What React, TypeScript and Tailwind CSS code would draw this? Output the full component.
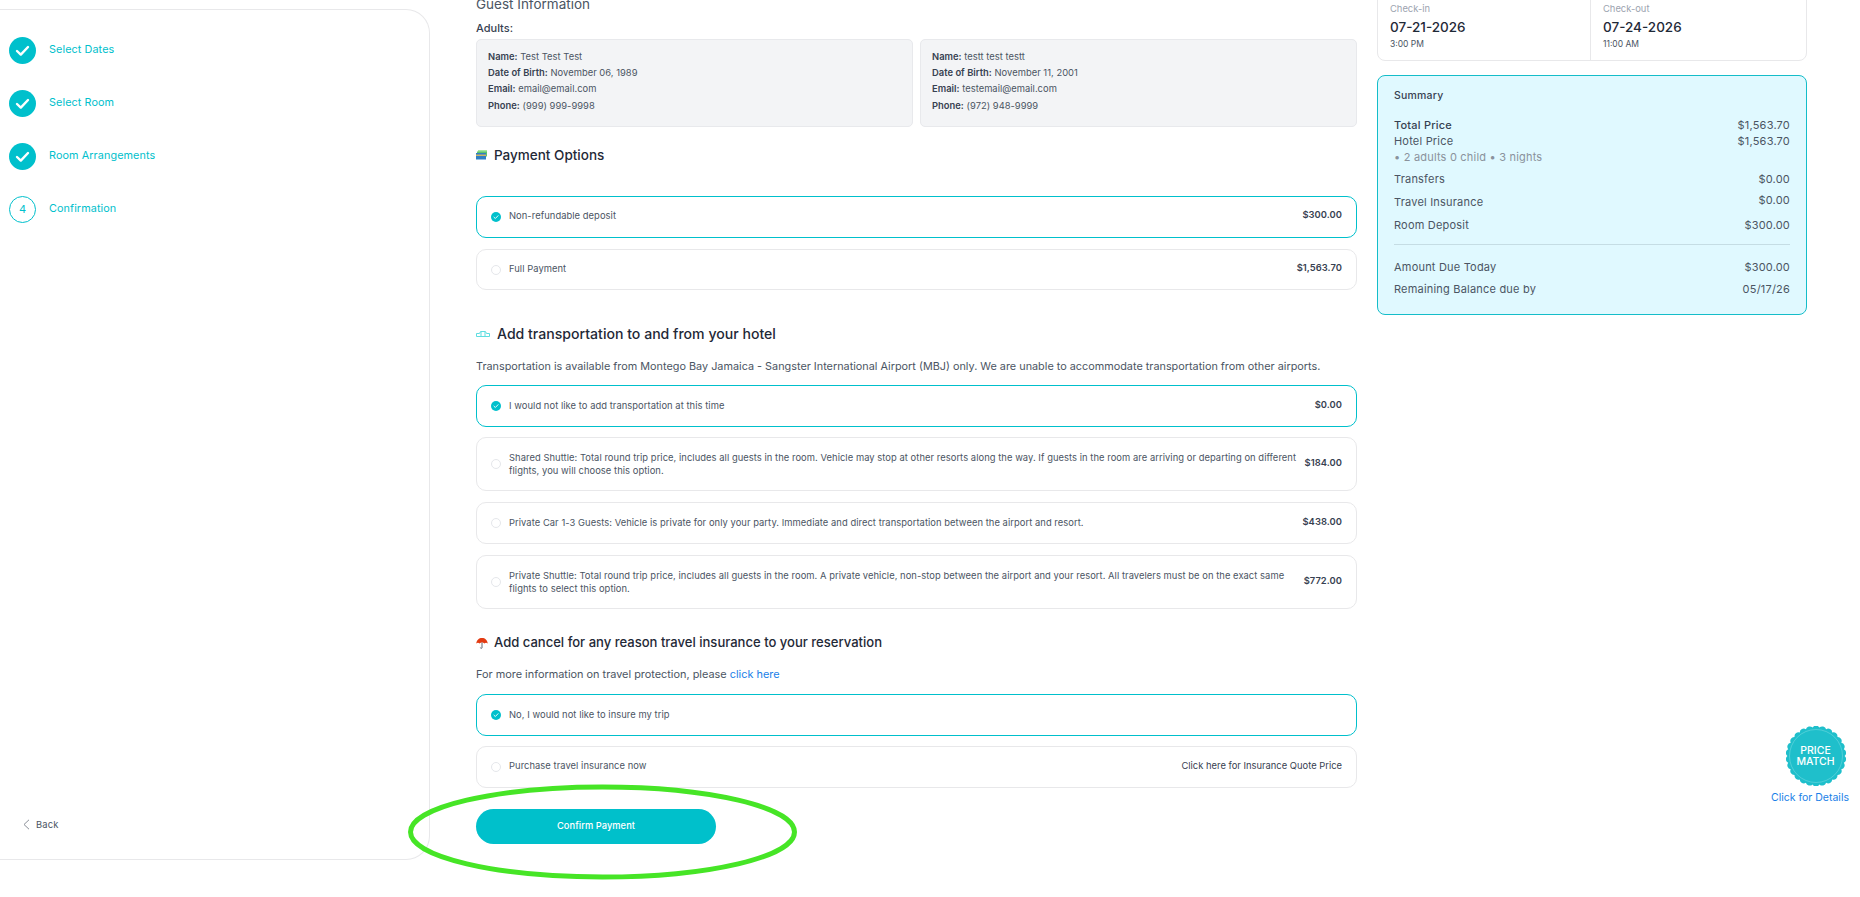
import React from "react";

const Check = ({ s = 27 }: { s?: number }) => (
  <svg width={s} height={s} viewBox="0 0 27 27" className="shrink-0">
    <circle cx="13.5" cy="13.5" r="13.5" fill="#00c0cc" />
    <path d="M8 14l3.8 3.6L19 10" fill="none" stroke="#fff" strokeWidth="2.4" strokeLinecap="round" strokeLinejoin="round" />
  </svg>
);

const Step = ({ label, n, low }: { label: string; n?: number; low?: boolean }) => (
  <div className="flex items-center h-[27px] gap-[13px]">
    {n ? (
      <div className="w-[27px] h-[27px] rounded-full border border-[#00c0cc] flex items-center justify-center text-[11px] text-[#00c0cc]">{n}</div>
    ) : (
      <Check />
    )}
    <span className={`text-[10.8px] text-[#00c0cc] tracking-[0.1px] ${low ? "" : "-mt-[1px]"}`}>{label}</span>
  </div>
);

const Option = ({ sel, h, price, children, mt, up }: { sel?: boolean; h: string; price: string; children: React.ReactNode; mt: string; up?: boolean }) => (
  <div className={`flex items-center rounded-[10px] border bg-white pl-[14px] pr-[14px] ${h} ${mt} ${sel ? "border-[#00c0cc]" : "border-[#e8e8ea]"}`}>
    {sel ? (
      <Check s={10} />
    ) : (
      <div className="w-[10px] h-[10px] rounded-full border border-[#e5e7eb] shrink-0" />
    )}
    <div className={`ml-[8px] flex-1 min-w-0 whitespace-nowrap text-[9.4px] leading-[13px] text-[#4b5563] tracking-[0.05px] ${up ? "-mt-[3px]" : "-mt-[1px]"}`}>{children}</div>
    <div className={`ml-1 text-[9.4px] font-semibold text-[#374151] tracking-[0.05px] whitespace-nowrap ${up ? "-mt-[3px]" : "-mt-[1px]"}`}>{price}</div>
  </div>
);

const Guest = ({ name, dob, email, phone }: { name: string; dob: string; email: string; phone: string }) => (
  <div className="flex-1 h-[88px] rounded-[5px] border border-[#e8e9ec] bg-[#f3f4f6] pl-[11px] pt-[9px] text-[9.4px] leading-[16px] text-[#4b5563] tracking-[0.02px]">
    <div><b className="font-semibold text-[#374151]">Name:</b> {name}</div>
    <div><b className="font-semibold text-[#374151]">Date of Birth:</b> {dob}</div>
    <div><b className="font-semibold text-[#374151]">Email:</b> {email}</div>
    <div className="mt-[1px]"><b className="font-semibold text-[#374151]">Phone:</b> {phone}</div>
  </div>
);

const Line = ({ a, b, cls = "", bcls = "" }: { a: string; b?: string; cls?: string; bcls?: string }) => (
  <div className={`flex justify-between h-[16px] items-center ${cls}`}>
    <span>{a}</span>
    {b && <span className={bcls}>{b}</span>}
  </div>
);

function scallop() {
  const n = 26;
  const cx = 30;
  const cy = 30;
  let d = "";
  for (let i = 0; i < n; i++) {
    const a0 = (i / n) * Math.PI * 2;
    const a1 = ((i + 1) / n) * Math.PI * 2;
    const r = 28.6;
    const x0 = cx + r * Math.cos(a0);
    const y0 = cy + r * Math.sin(a0);
    const x1 = cx + r * Math.cos(a1);
    const y1 = cy + r * Math.sin(a1);
    d += i === 0 ? `M${x0.toFixed(2)} ${y0.toFixed(2)}` : "";
    d += `A4 4 0 0 1 ${x1.toFixed(2)} ${y1.toFixed(2)}`;
  }
  return d + "Z";
}

export default function App() {
  return (
    <div className="relative h-[897px] w-[1860px] overflow-hidden bg-white flex font-['Inter',sans-serif]">
      <aside className="mt-[9px] h-[851px] w-[430px] shrink-0 rounded-r-[24px] border border-l-0 border-[#e8e8ea] pl-[9px] pt-[27px] pb-[27px] flex flex-col">
        <div className="flex flex-col gap-[26px]">
          <Step label="Select Dates" />
          <Step label="Select Room" />
          <Step label="Room Arrangements" low />
          <Step label="Confirmation" n={4} low />
        </div>
        <div className="mt-auto ml-[14px] flex items-center gap-[6px] text-[9.4px] text-[#4b5563] tracking-[0.2px]">
          <svg width="7" height="11" viewBox="0 0 7 11"><path d="M6 .8L1 5.5 6 10.2" fill="none" stroke="#8a8f98" strokeWidth="1" /></svg>
          <span>Back</span>
        </div>
      </aside>

      <main className="ml-[46px] w-[881px] shrink-0 -mt-[6px] text-[#374151]">
        <div className="h-[20px] flex items-center text-[13.5px] text-[#4b5563]">Guest Information</div>
        <div className="mt-[6px] h-[16px] flex items-center text-[11px] font-medium text-[#374151]">Adults:</div>
        <div className="mt-[3px] flex gap-[7px]">
          <Guest name="Test Test Test" dob="November 06, 1989" email="email@email.com" phone="(999) 999-9998" />
          <Guest name="testt test testt" dob="November 11, 2001" email="testemail@email.com" phone="(972) 948-9999" />
        </div>

        <div className="mt-[18px] h-[20px] flex items-center gap-[7px] text-[13.5px] font-[450] text-[#1f2937]">
          <svg width="11" height="10" viewBox="0 0 11 10">
            <rect x="2" y="0" width="9" height="5" fill="#a7e6a0" />
            <rect x="1" y="1.5" width="10" height="5" fill="#5cc46a" />
            <rect x="0" y="3" width="10" height="6.5" fill="#2f7fc4" />
            <rect x="0" y="4.6" width="10" height="1.2" fill="#f3c04e" />
          </svg>
          Payment Options
        </div>
        <Option sel up h="h-[42px]" mt="mt-[31px]" price="$300.00">Non-refundable deposit</Option>
        <Option up h="h-[41px]" mt="mt-[11px]" price="$1,563.70">Full Payment</Option>

        <div className="mt-[34px] h-[20px] flex items-center gap-[7px] text-[14.1px] font-[450] text-[#1f2937]">
          <svg width="14" height="7" viewBox="0 0 14 7" fill="none" stroke="#5fdde0" strokeWidth="1">
            <path d="M.5 2.5h3l1-2h5l1 2h3v3h-13z" />
            <path d="M5 1v4M9 1v4" />
          </svg>
          Add transportation to and from your hotel
        </div>
        <div className="mt-[14px] h-[16px] flex items-center text-[10.85px] text-[#4b5563] whitespace-nowrap">
          Transportation is available from Montego Bay Jamaica - Sangster International Airport (MBJ) only. We are unable to accommodate transportation from other airports.
        </div>
        <Option sel h="h-[42px]" mt="mt-[11px]" price="$0.00">I would not like to add transportation at this time</Option>
        <Option h="h-[54px]" mt="mt-[10px]" price="$184.00">
          Shared Shuttle: Total round trip price, includes all guests in the room. Vehicle may stop at other resorts along the way. If guests in the room are arriving or departing on different<br />flights, you will choose this option.
        </Option>
        <Option h="h-[42px]" mt="mt-[11px]" price="$438.00">
          Private Car 1-3 Guests: Vehicle is private for only your party. Immediate and direct transportation between the airport and resort.
        </Option>
        <Option h="h-[54px]" mt="mt-[11px]" price="$772.00">
          Private Shuttle: Total round trip price, includes all guests in the room. A private vehicle, non-stop between the airport and your resort. All travelers must be on the exact same<br />flights to select this option.
        </Option>

        <div className="mt-[24px] h-[20px] flex items-center gap-[6px] text-[13.06px] font-[450] text-[#1f2937]">
          <svg width="12" height="12" viewBox="0 0 12 12">
            <path d="M.3 6.6C.6 3 3 1 6 1s5.4 2 5.7 5.6C10.6 5.6 9.4 5.6 8.4 6.6 7.6 5.7 6.8 5.6 6 5.6s-1.6.1-2.4 1C2.6 5.6 1.4 5.6.3 6.6z" fill="#e33b12" />
            <path d="M6 5.6v5c0 1-1.6 1-1.6 0" fill="none" stroke="#374151" strokeWidth=".8" />
          </svg>
          Add cancel for any reason travel insurance to your reservation
        </div>
        <div className="mt-[13px] h-[16px] flex items-center text-[10.9px] text-[#4b5563]">
          For more information on travel protection, please&nbsp;<span className="text-[#1a7fe8]">click here</span>
        </div>
        <Option sel h="h-[42px]" mt="mt-[12px]" price="">No, I would not like to insure my trip</Option>
        <div className="mt-[10px] h-[42px] flex items-center rounded-[10px] border border-[#e8e8ea] px-[14px]">
          <div className="w-[10px] h-[10px] rounded-full border border-[#e5e7eb] shrink-0" />
          <div className="ml-[8px] flex-1 text-[9.4px] text-[#4b5563] tracking-[0.05px] -mt-[1px]">Purchase travel insurance now</div>
          <div className="text-[9.4px] text-[#374151] -mt-[1px]">Click here for Insurance Quote Price</div>
        </div>
        <div className="mt-[21px] h-[35px] w-[240px] rounded-full bg-[#00c0cb] flex items-center justify-center text-[9.3px] font-medium text-white tracking-[0.05px]">
          <span className="-mt-[1px]">Confirm Payment</span>
        </div>
      </main>

      <section className="ml-[20px] w-[430px] shrink-0 -mt-[10px]">
        <div className="h-[71px] rounded-[8px] border border-[#e8e8ea] flex">
          <div className="w-[213px] pl-[12px] pt-[12px] border-r border-[#e8e8ea]">
            <div className="h-[12px] flex items-center text-[9.4px] text-[#9ca3af]">Check-in</div>
            <div className="mt-[2px] h-[20px] flex items-center text-[13.5px] font-[450] text-[#1f2937]">07-21-2026</div>
            <div className="mt-[1px] h-[12px] flex items-center text-[8.5px] text-[#4b5563]">3:00 PM</div>
          </div>
          <div className="flex-1 pl-[12px] pt-[12px]">
            <div className="h-[12px] flex items-center text-[9.4px] text-[#9ca3af]">Check-out</div>
            <div className="mt-[2px] h-[20px] flex items-center text-[13.5px] font-[450] text-[#1f2937]">07-24-2026</div>
            <div className="mt-[1px] h-[12px] flex items-center text-[8.5px] text-[#4b5563]">11:00 AM</div>
          </div>
        </div>
        <div className="mt-[14px] h-[240px] rounded-[8px] border border-[#14bdc9] bg-[#e0f9ff] px-[16px] pt-[12px] text-[11px] text-[#4b5563] tracking-[0.2px]">
          <div className="h-[16px] flex items-center text-[10.5px] font-medium text-[#374151]">Summary</div>
          <Line a="Total Price" b="$1,563.70" cls="mt-[13px] font-medium text-[#374151]" bcls="font-normal text-[#4b5563]" />
          <Line a="Hotel Price" b="$1,563.70" />
          <Line a="• 2 adults 0 child • 3 nights" cls="text-[#8a929c]" />
          <Line a="Transfers" b="$0.00" cls="mt-[6px]" />
          <div className="mt-[7px] flex justify-between h-[16px]"><span>Travel Insurance</span><span className="-mt-[2px]">$0.00</span></div>
          <Line a="Room Deposit" b="$300.00" cls="mt-[7px]" />
          <div className="mt-[11px] h-px bg-[#c5dde4]" />
          <Line a="Amount Due Today" b="$300.00" cls="mt-[14px]" />
          <Line a="Remaining Balance due by" b="05/17/26" cls="mt-[6px]" />
        </div>
      </section>

      <svg className="absolute left-[408px] top-[784px]" width="389" height="96" viewBox="0 0 389 96">
        <ellipse cx="194.5" cy="48" rx="192" ry="45" fill="none" stroke="#46e526" strokeWidth="5" />
      </svg>

      <div className="absolute left-[1771px] top-[726px] w-[78px] flex flex-col items-center">
        <div className="relative w-[60px] h-[60px] ml-[11px]">
          <svg width="60" height="60" viewBox="0 0 60 60" className="absolute inset-0">
            <path d={scallop()} fill="#1fbfcb" />
            <circle cx="30" cy="30" r="26.5" fill="none" stroke="#7fdde3" strokeWidth=".5" />
          </svg>
          <div className="absolute inset-0 flex flex-col items-center justify-center text-[10.5px] leading-[11px] font-medium text-white">
            <span>PRICE</span>
            <span>MATCH</span>
          </div>
        </div>
        <div className="mt-[4px] h-[14px] whitespace-nowrap text-[10.5px] text-[#1a7fe8]">Click for Details</div>
      </div>
    </div>
  );
}
